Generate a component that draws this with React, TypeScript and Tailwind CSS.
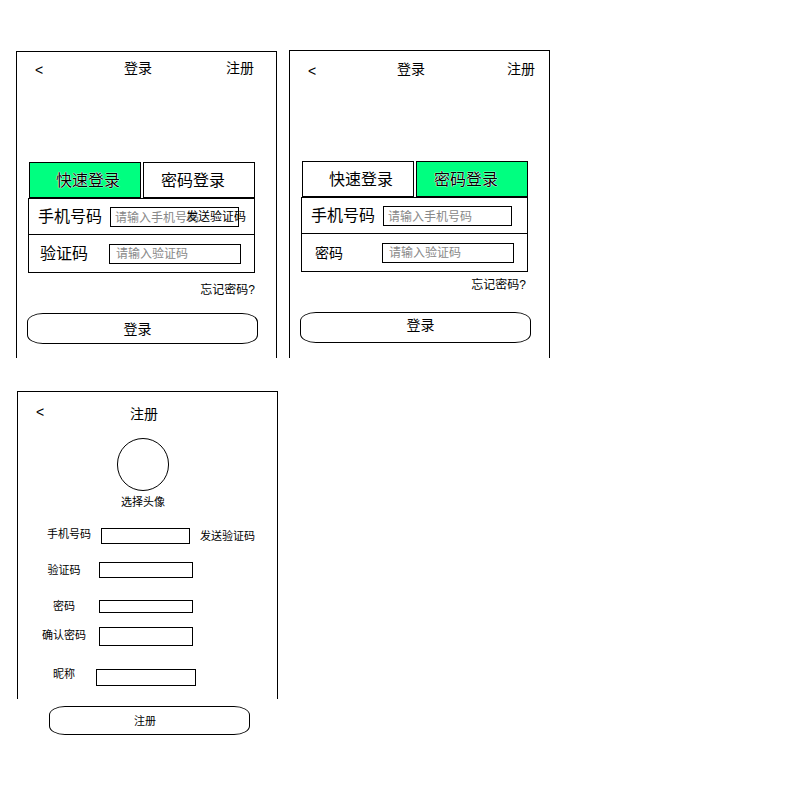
import { useId, useState } from "react";
import clsx from "clsx";

type LoginMode = "quick" | "password";

const pillButton = "block border border-black rounded-[16px/9px]";

function Tab({
  active,
  className,
  onClick,
  children,
}: {
  active: boolean;
  className: string;
  onClick: () => void;
  children: string;
}) {
  return (
    <button
      type="button"
      role="tab"
      aria-selected={active}
      onClick={onClick}
      className={clsx(
        "h-9 border border-black pt-0.5 text-left text-base leading-6",
        active && "bg-[#00ff80] [text-shadow:0_0_1px_#fff,0_0_1px_#fff,0_0_1px_#fff]",
        className,
      )}
    >
      {children}
    </button>
  );
}

function LoginPanel({
  initialMode,
  headerClass,
  forgotClass,
  submitClass,
  panelClass,
}: {
  initialMode: LoginMode;
  headerClass: string;
  forgotClass: string;
  submitClass: string;
  panelClass: string;
}) {
  const [mode, setMode] = useState<LoginMode>(initialMode);
  const phoneId = useId();
  const secretId = useId();
  const quick = mode === "quick";

  return (
    <section className={clsx("border border-b-0 border-black", panelClass)}>
      <header className={clsx("flex h-[110px] items-start pl-[18px] text-sm leading-5", headerClass)}>
        <div className="w-[89px] pt-0.5">
          <button type="button" aria-label="返回" className="block">
            &lt;
          </button>
        </div>
        <h1>登录</h1>
        <a href="#register" className="ml-auto">
          注册
        </a>
      </header>

      <form className="ml-[11px] mr-[21px]" onSubmit={(e) => e.preventDefault()}>
        <div role="tablist" className="ml-px grid grid-cols-2 gap-0.5">
          <Tab active={quick} className="pl-[26px]" onClick={() => setMode("quick")}>
            快速登录
          </Tab>
          <Tab active={!quick} className="pl-[17px]" onClick={() => setMode("password")}>
            密码登录
          </Tab>
        </div>

        <div className="border border-black">
          <div className="relative flex h-9 items-center border-b border-black pr-[15px]">
            <label htmlFor={phoneId} className="w-[81px] shrink-0 pl-[9px] text-base leading-6">
              手机号码
            </label>
            <input
              id={phoneId}
              type="tel"
              placeholder="请输入手机号码"
              className="h-5 min-w-0 flex-1 border border-black pl-1 pt-0.5 text-xs placeholder:text-[#888]"
            />
            {quick && (
              <button type="button" className="absolute right-2 text-xs">
                发送验证码
              </button>
            )}
          </div>
          <div className="flex h-[37px] items-center pr-[13px]">
            <label
              htmlFor={secretId}
              className={clsx("w-20 shrink-0 leading-6", quick ? "pl-[11px] text-base" : "pl-[13px] text-sm")}
            >
              {quick ? "验证码" : "密码"}
            </label>
            <input
              id={secretId}
              type={quick ? "text" : "password"}
              placeholder="请输入验证码"
              className="h-5 min-w-0 flex-1 border border-black pl-1.5 text-xs placeholder:text-[#888]"
            />
          </div>
        </div>

        <div className={clsx("flex justify-end text-xs leading-[18px]", forgotClass)}>
          <a href="#forgot">忘记密码?</a>
        </div>

        <div className="-ml-px -mr-[3px]">
          <button type="submit" className={clsx(pillButton, "h-[31px] w-full text-sm", submitClass)}>
            登录
          </button>
        </div>
      </form>
    </section>
  );
}

const registerFields = [
  { label: "验证码", type: "text", row: "mt-[18px] h-4", input: "h-4 w-[94px]" },
  { label: "密码", type: "password", row: "mt-5 h-[15px]", input: "h-[13px] w-[94px]" },
  { label: "确认密码", type: "password", row: "mt-3.5 h-[19px]", input: "h-[19px] w-[94px]" },
  { label: "昵称", type: "text", row: "mt-5 h-5", input: "h-[17px] w-[100px]" },
];

function RegisterPanel() {
  return (
    <form
      id="register"
      className="w-full max-w-[261px] text-[11px] leading-4"
      onSubmit={(e) => e.preventDefault()}
    >
      <div className="border border-b-0 border-black pb-[13px]">
        <header className="flex items-start pl-[18px] pt-3 text-sm leading-5">
          <div className="-mt-0.5 w-[94px]">
            <button type="button" aria-label="返回" className="block">
              &lt;
            </button>
          </div>
          <h1>注册</h1>
        </header>

        <div className="mt-3.5 flex flex-col items-center pr-[9px]">
          <button
            type="button"
            aria-labelledby="avatar-caption"
            className="block h-[53px] w-[52px] rounded-full border border-black"
          />
          <span id="avatar-caption" className="mt-[3px]">
            选择头像
          </span>
        </div>

        <div className="mt-4 flex h-[18px] items-end gap-2.5 pl-[29px]">
          <label htmlFor="register-phone" className="self-start">
            手机号码
          </label>
          <input id="register-phone" type="tel" className="h-4 w-[89px] border border-black px-1" />
          <button type="button">发送验证码</button>
        </div>

        {registerFields.map((field) => (
          <div key={field.label} className={clsx("flex items-end pl-6", field.row)}>
            <label htmlFor={`register-${field.label}`} className="w-11 self-start text-center">
              {field.label}
            </label>
            <div className="ml-2.5 flex w-[100px] justify-center">
              <input
                id={`register-${field.label}`}
                type={field.type}
                className={clsx("border border-black px-1", field.input)}
              />
            </div>
          </div>
        ))}
      </div>

      <div className="mt-[7px] pl-8 pr-7">
        <button type="submit" className={clsx(pillButton, "h-[29px] w-full pr-[9px]")}>
          注册
        </button>
      </div>
    </form>
  );
}

export default function App() {
  return (
    <main className="min-h-screen bg-white pb-16 pt-[50px] font-['Liberation_Sans','Noto_Sans_CJK_SC',sans-serif] text-black">
      <div className="px-4">
        <div className="grid max-w-[534px] grid-cols-2 items-end gap-3">
          <LoginPanel
            initialMode="quick"
            panelClass="pb-3.5"
            headerClass="pt-1.5 pr-[22px]"
            forgotClass="mt-2 mb-3.5"
            submitClass="pr-2.5"
          />
          <LoginPanel
            initialMode="password"
            panelClass="pb-[15px]"
            headerClass="pt-2 pr-3.5"
            forgotClass="mt-1 mb-[18px] pr-0.5"
            submitClass="pb-1.5 pl-2.5"
          />
        </div>
      </div>
      <div className="mt-[33px] px-[17px]">
        <RegisterPanel />
      </div>
    </main>
  );
}
